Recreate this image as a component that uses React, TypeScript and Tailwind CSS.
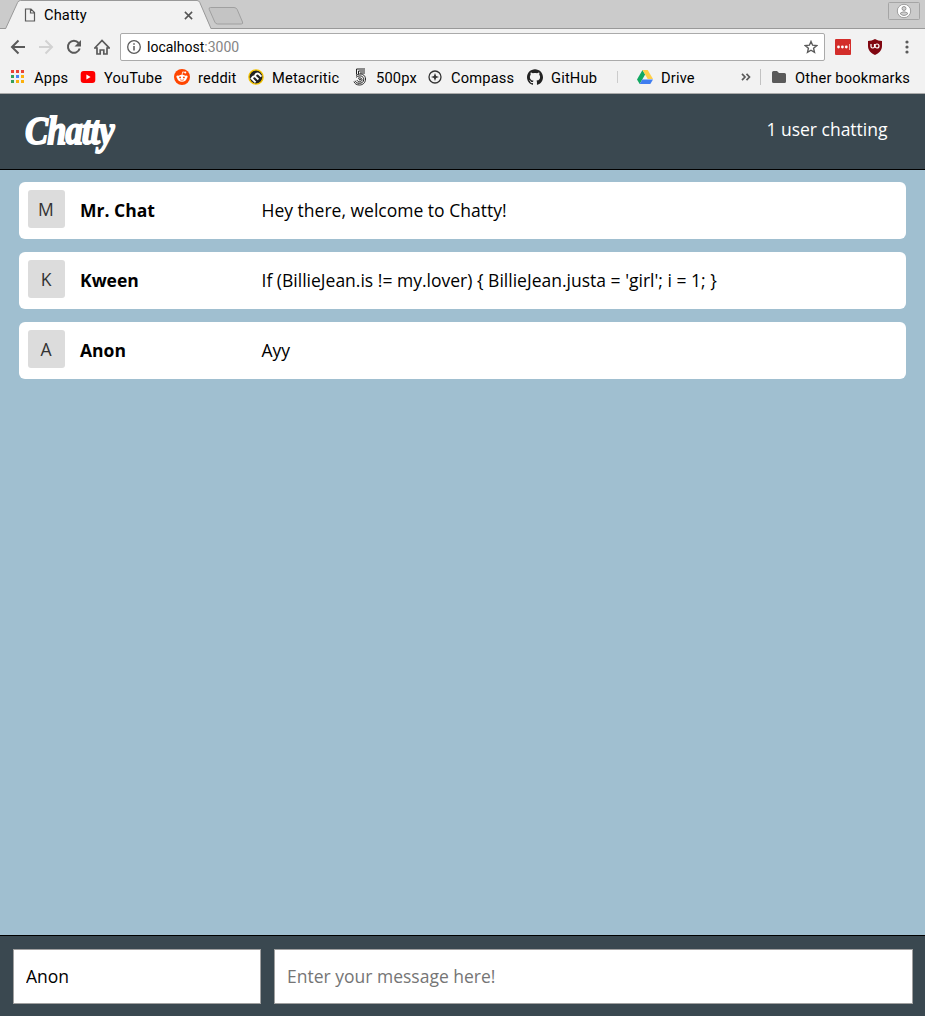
import type { ReactNode } from 'react';
import { SiGithub } from 'react-icons/si';

function Bookmark({ icon, label, className }: { icon: ReactNode; label: string; className: string }) {
  return (
    <a className={`flex shrink-0 items-center gap-2 whitespace-nowrap ${className}`}>
      <span className="flex size-4 shrink-0 items-center justify-center">{icon}</span>
      <span className="pt-px">{label}</span>
    </a>
  );
}

const appColors = ['#ea4335', '#ea4335', '#ea4335', '#34a05a', '#4285f4', '#fbb00b', '#34a05a', '#fbb00b', '#fbb00b'];

function AppsIcon() {
  return (
    <svg width="16" height="16" viewBox="0 0 16 16">
      {appColors.map((c, i) => (
        <rect key={i} x={1 + (i % 3) * 5} y={1 + Math.floor(i / 3) * 5} width="3" height="3" fill={c} />
      ))}
    </svg>
  );
}

function YouTubeIcon() {
  return (
    <svg width="16" height="16" viewBox="0 0 16 16">
      <rect x="0.7" y="2" width="14.6" height="12" rx="3" fill="#f00" />
      <path d="M6.4 5.5v5L10.6 8z" fill="#fff" />
    </svg>
  );
}

function RedditIcon() {
  return (
    <svg width="16" height="16" viewBox="0 0 16 16">
      <circle cx="8" cy="8" r="8" fill="#ff4500" />
      <path d="M8 6l.7-3.100 2.400.5" fill="none" stroke="#fff" strokeWidth=".8" />
      <circle cx="11.300" cy="3.600" r="1" fill="#fff" />
      <circle cx="3.700" cy="7.800" r="1.300" fill="#fff" />
      <circle cx="12.300" cy="7.800" r="1.300" fill="#fff" />
      <ellipse cx="8" cy="9.200" rx="4.700" ry="3.500" fill="#fff" />
      <circle cx="6.100" cy="8.400" r=".95" fill="#ff4500" />
      <circle cx="9.900" cy="8.400" r=".95" fill="#ff4500" />
      <path d="M6 10.700q2 1.300 4 0" fill="none" stroke="#ff4500" strokeWidth=".7" />
    </svg>
  );
}

function MetacriticIcon() {
  return (
    <svg width="16" height="16" viewBox="0 0 16 16">
      <circle cx="8" cy="8" r="7.1" fill="#222" stroke="#f5c400" strokeWidth="1.400" />
      <g transform="rotate(-45 8 8)" fill="none" stroke="#fff" strokeWidth="1.9">
        <path d="M3.900 11.500V5M3.900 7.200c.4-1.900 4-2 4 .5v3.800M7.900 7.400c.4-2 4.200-2 4.200.5v3.600" />
      </g>
    </svg>
  );
}

function FiveHundredIcon() {
  return (
    <svg width="16" height="18" viewBox="0 0 16 18" fill="none" stroke="#222">
      <path d="M13 1H4.500v5.500M13 3H6.500v3M13 5H8" />
      <path d="M4 7.500c5-3.500 9.500-.5 9.500 3.500s-3 6-6 6-5-1.500-5.500-3.500" />
      <path d="M4 9.300c4-2.800 7.700-1 7.700 2s-2 4-4.400 4-3.600-1-4-2.500M6 10.400c2-1.400 4 0 4 1.200s-1 2.200-2.400 2.200-2.200-.700-2.600-1.800" />
      <circle cx="8" cy="11.600" r=".6" />
    </svg>
  );
}

function CompassIcon() {
  return (
    <svg width="16" height="16" viewBox="0 0 16 16">
      <circle cx="8" cy="8" r="6" fill="none" stroke="#333" strokeWidth="1.300" />
      <path d="M8 4l1.100 2.900L12 8 9.100 9.100 8 12 6.900 9.100 4 8l2.900-1.100z" fill="#333" />
    </svg>
  );
}

function DriveIcon() {
  return (
    <svg width="16" height="16" viewBox="0 0 16 16">
      <path d="M5.500 1L0 10.500 2.700 15 8.100 5.500z" fill="#11a861" />
      <path d="M5.500 1h5.200L16 10h-5.300z" fill="#ffcf48" />
      <path d="M5.300 10.500H16L13.300 15H2.700z" fill="#3f7df0" />
    </svg>
  );
}

function TabStrip() {
  return (
    <div className="relative h-[29px] shrink-0 bg-[#cbcbcb]">
      <svg className="absolute inset-0" width="925" height="29" viewBox="0 0 925 29">
        <path d="M0 28.500h925" stroke="#999" />
        <path d="M5.500 29L17.600 2.500Q18.500.500 20.500.500H197Q199 .500 199.800 2.500L211 29z" fill="#f2f2f2" />
        <path d="M0 28.500H5.700L17.600 2.500Q18.500.500 20.500.500H197Q199 .500 199.800 2.500L211 28.500" fill="none" stroke="#999" />
        <path d="M210.500 7.500H234Q236.200 7.500 237.200 9.500L242.500 22Q243.300 24 241.200 24H217.500Q215.700 24 214.800 22L209.200 9.300Q208.600 7.500 210.500 7.500z" fill="#c4c4c4" stroke="#a0a0a0" />
        <rect x="888.500" y="2.500" width="31" height="17" rx="1" fill="#cbcbcb" stroke="#a5a5a5" />
        <circle cx="904" cy="11" r="6.700" fill="#fff" stroke="#8b8b8b" strokeWidth=".8" />
        <circle cx="904" cy="8.500" r="2" fill="#d0d0d0" stroke="#858585" strokeWidth=".8" />
        <path d="M900 13.500q4-3.300 8 0-4 4-8 0z" fill="#d0d0d0" stroke="#858585" strokeWidth=".8" />
      </svg>
      <div className="relative flex h-full w-[200px] items-center pt-px pl-[24px]">
        <svg width="12" height="14" viewBox="0 0 12 14" fill="none" stroke="#5a5a5a" strokeWidth="1.200">
          <path d="M1.500 1H7l3.500 3.500V13h-9zM6.500 1v4H10.500" />
        </svg>
        <span className="ml-2 text-[14.670px] leading-5 tracking-[0.100px] text-black">Chatty</span>
        <svg className="mr-[7px] ml-auto" width="9" height="9" viewBox="0 0 10 10" stroke="#555" strokeWidth="1.700">
          <path d="M1 1l8 8M9 1L1 9" />
        </svg>
      </div>
    </div>
  );
}

function Toolbar() {
  return (
    <div className="flex h-[36px] shrink-0 items-center bg-[#f2f2f2] pl-[10px]">
      <svg width="16" height="16" viewBox="0 0 16 16" fill="none" stroke="#5a5a5a" strokeWidth="2">
        <path d="M15 8H2.500M8.500 1.500L2 8l6.500 6.500" />
      </svg>
      <svg className="ml-3" width="16" height="16" viewBox="0 0 16 16" fill="none" stroke="#d2d2d2" strokeWidth="2">
        <path d="M1 8h12.500M7.500 1.500L14 8l-6.500 6.500" />
      </svg>
      <svg className="ml-3" width="16" height="16" viewBox="0 0 16 16" fill="none" stroke="#5a5a5a" strokeWidth="2">
        <path d="M13.700 9.500A6 6 0 1 1 12.600 4" />
        <path d="M15 1v6.500H8.500z" fill="#5a5a5a" stroke="none" />
      </svg>
      <svg className="ml-3" width="16" height="16" viewBox="0 0 16 16" fill="none" stroke="#5a5a5a" strokeWidth="1.700">
        <path d="M.8 9L8 1.500 15.200 9H13v6H9.800v-4H6.200v4H3V9z" />
      </svg>
      <div className="ml-[10px] flex h-[28px] w-[705px] items-center rounded-[2px] border border-[#aaa] bg-white pr-[6px] pl-[6px]">
        <svg width="14" height="14" viewBox="0 0 14 14" fill="none" stroke="#5a5a5a">
          <circle cx="7" cy="7" r="6.300" strokeWidth="1.300" />
          <path d="M7 6v4.500M7 3.300v1.500" strokeWidth="1.500" />
        </svg>
        <span className="ml-[6px] text-[14px] leading-5 text-black">
          localhost<span className="text-[#858585]">:3000</span>
        </span>
        <svg className="ml-auto" width="14" height="14" viewBox="0 0 14 14" fill="none" stroke="#5a5a5a" strokeWidth="1.400">
          <path d="M7 1.500l1.600 3.700 4.100.4-3.100 2.700.9 4L7 10.200l-3.500 2.100.9-4L1.300 5.600l4.100-.4z" />
        </svg>
      </div>
      <svg className="ml-[10px]" width="16" height="16" viewBox="0 0 16 16">
        <rect width="16" height="16" rx="1" fill="#d32d2a" />
        <path d="M14.500 5v6" stroke="#f3b0ae" />
        <circle cx="3.500" cy="8" r="1.400" fill="#fff" />
        <circle cx="7.400" cy="8" r="1.400" fill="#fff" />
        <circle cx="11.300" cy="8" r="1.400" fill="#fff" />
      </svg>
      <svg className="ml-4" width="16" height="16" viewBox="0 0 16 16">
        <path d="M8 0c2 1.300 4.500 1.900 7 1.900V7c0 4.500-3 7-7 9-4-2-7-4.500-7-9V1.900C3.500 1.900 6 1.300 8 0z" fill="#800610" />
        <path d="M4 5v2.500q0 1.500 1.500 1.500T7.500 8V5" fill="none" stroke="#fff" strokeWidth="1.200" />
        <circle cx="10" cy="7" r="2" fill="none" stroke="#fff" strokeWidth="1.200" />
      </svg>
      <svg className="ml-[22px]" width="4" height="14" viewBox="0 0 4 14" fill="#5a5a5a">
        <circle cx="2" cy="2" r="1.600" />
        <circle cx="2" cy="7" r="1.600" />
        <circle cx="2" cy="12" r="1.600" />
      </svg>
    </div>
  );
}

function BookmarksBar() {
  return (
    <div className="flex h-[29px] shrink-0 items-center border-b border-[#aaa] bg-[#f2f2f2] pb-[4px] pl-[10px] text-[14.670px] leading-5 tracking-[0.170px] text-black">
      <Bookmark className="w-[70px]" icon={<AppsIcon />} label="Apps" />
      <Bookmark className="w-[94px]" icon={<YouTubeIcon />} label="YouTube" />
      <Bookmark className="w-[74px]" icon={<RedditIcon />} label="reddit" />
      <Bookmark className="w-[104px]" icon={<MetacriticIcon />} label="Metacritic" />
      <Bookmark className="w-[75px]" icon={<FiveHundredIcon />} label="500px" />
      <Bookmark className="w-[100px]" icon={<CompassIcon />} label="Compass" />
      <Bookmark className="w-[90px]" icon={<SiGithub size={16} color="#222" />} label="GitHub" />
      <div className="h-3 w-px bg-[#ccc]" />
      <Bookmark className="ml-[19px] w-[104px]" icon={<DriveIcon />} label="Drive" />
      <svg width="10" height="8" viewBox="0 0 10 8" fill="none" stroke="#5a5a5a" strokeWidth="1.700">
        <path d="M1 .8L4 4 1 7.200M5.500.8l3 3.200-3 3.200" />
      </svg>
      <div className="ml-[9px] h-4 w-px bg-[#c2c2c2]" />
      <Bookmark
        className="ml-[10px]"
        icon={
          <svg width="16" height="16" viewBox="0 0 16 16">
            <path d="M1 3.500Q1 2 2.500 2H6l2 2h5.500Q15 4 15 5.500v7q0 1.500-1.500 1.500h-11Q1 14 1 12.500z" fill="#5a5a5a" />
          </svg>
        }
        label="Other bookmarks"
      />
    </div>
  );
}

const messages = [
  { name: 'Mr. Chat', text: 'Hey there, welcome to Chatty!' },
  { name: 'Kween', text: "If (BillieJean.is != my.lover) { BillieJean.justa = 'girl'; i = 1; }" },
  { name: 'Anon', text: 'Ayy' },
];

export default function App() {
  return (
    <div className="flex h-[1016px] w-[925px] flex-col overflow-hidden bg-[#a0bfd0] font-['Open_Sans',sans-serif]">
      <div className="flex shrink-0 flex-col font-[Roboto,sans-serif]">
        <TabStrip />
        <Toolbar />
        <BookmarksBar />
      </div>
      <header className="flex h-[76px] shrink-0 items-start justify-between border-b border-black bg-[#3a4850] pr-[37.500px] pl-[25px] text-white">
        <h1 className="mt-[13px] origin-left scale-x-[0.840] font-['Liberation_Serif',serif] text-[41px] leading-[46px] font-bold tracking-[-1px] italic [-webkit-text-stroke:1.800px_white]">
          Chatty
        </h1>
        <p className="mt-[23px] text-[17.500px] leading-6">1 user chatting</p>
      </header>
      <main className="flex flex-1 flex-col gap-[13px] px-[19px] pt-3">
        {messages.map((m) => (
          <article key={m.name} className="flex h-[57px] items-center rounded-[6px] bg-white pl-[9px] text-[17.530px] text-black">
            <div className="mb-[3px] flex h-[38px] w-[37px] items-center justify-center rounded-[3px] bg-[#dcdcdc] pr-px text-[#333]">{m.name[0]}</div>
            <div className="ml-[15px] w-[181.500px] font-bold">{m.name}</div>
            <div>{m.text}</div>
          </article>
        ))}
      </main>
      <footer className="flex h-[81px] shrink-0 gap-[13px] border-t border-black bg-[#3a4850] px-3 pt-[13px] pl-[13px]">
        <input
          className="h-[55px] w-[248px] border border-[#a0a0a0] bg-white px-3 pb-[2px] text-[17.500px] text-black"
          defaultValue="Anon"
        />
        <input
          className="h-[55px] w-[639px] border border-[#a0a0a0] bg-white px-3 pb-[2px] text-[17.500px] text-black placeholder:text-[#757575]"
          placeholder="Enter your message here!"
        />
      </footer>
    </div>
  );
}
